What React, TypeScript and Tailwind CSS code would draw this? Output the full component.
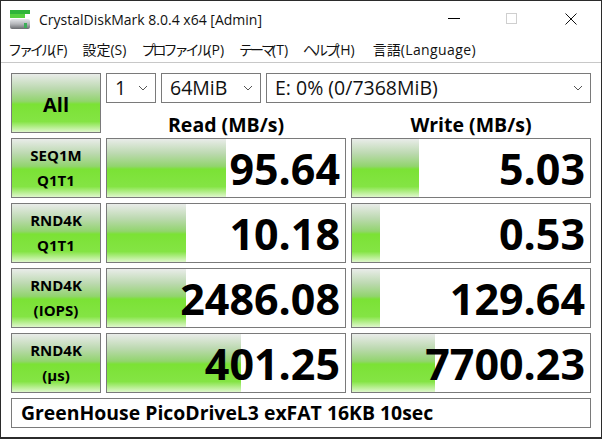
const ui = { fontFamily: '"Open Sans", "Noto Sans CJK JP", sans-serif' };

const bar = 'bg-[linear-gradient(to_bottom,#e9ece9_0%,#bcd9b0_25%,#92d46e_47%,#7be235_52%,#84e444_82%,#dff7cc_100%)]';

const rows = [
  { top: 'SEQ1M', bottom: 'Q1T1', read: '95.64', readBar: 119, write: '5.03', writeBar: 67 },
  { top: 'RND4K', bottom: 'Q1T1', read: '10.18', readBar: 79, write: '0.53', writeBar: 28 },
  { top: 'RND4K', bottom: '(IOPS)', read: '2486.08', readBar: 79, write: '129.64', writeBar: 28 },
  { top: 'RND4K', bottom: '(μs)', read: '401.25', readBar: 134, write: '7700.23', writeBar: 83 },
];

// katakana in the original menu font is a lot narrower than Noto's
const menus = [
  { jp: 'ファイル', key: '(F)', jpClass: 'tracking-[-3px]', keyClass: '' },
  { jp: '設定', key: '(S)', jpClass: '', keyClass: '' },
  { jp: 'プロファイル', key: '(P)', jpClass: 'tracking-[-3px]', keyClass: '' },
  { jp: 'テーマ', key: '(T)', jpClass: 'tracking-[-3px]', keyClass: '' },
  { jp: 'ヘルプ', key: '(H)', jpClass: 'tracking-[-3px]', keyClass: '' },
  { jp: '言語', key: '(Language)', jpClass: 'ml-[3px]', keyClass: 'tracking-[0.4px]' },
];

function Chevron() {
  return (
    <svg width="10" height="6" viewBox="0 0 10 6" className="shrink-0">
      <path d="M1 1l4 4 4-4" fill="none" stroke="#555" strokeWidth="1" />
    </svg>
  );
}

function Select({ label, className }: { label: string; className: string }) {
  return (
    <div className={`flex h-[30px] items-center justify-between border border-[#7a7a7a] pl-2 pr-[7px] text-[19.5px] ${className}`}>
      <span>{label}</span>
      <Chevron />
    </div>
  );
}

function Score({ value, width }: { value: string; width: number }) {
  return (
    <div className="relative flex h-[60px] items-center justify-end overflow-hidden border border-[#7a7a7a] pr-[5px] text-[43px] font-bold leading-none text-black">
      <div className={`absolute inset-y-0 left-0 ${bar}`} style={{ width }} />
      <span className="relative">{value}</span>
    </div>
  );
}

function DiskIcon() {
  return (
    <svg width="21" height="21" viewBox="0 0 21 21" className="mt-[3px]">
      <defs>
        <linearGradient id="disk" x1="0" y1="0" x2="0" y2="1">
          <stop offset="0" stopColor="#e4e6ea" />
          <stop offset="0.5" stopColor="#b4b6ba" />
          <stop offset="1" stopColor="#6a6c70" />
        </linearGradient>
      </defs>
      <rect x="0" y="0" width="20" height="4" fill="#2fb53a" />
      <rect x="0" y="4" width="15" height="4" fill="#55d040" />
      <rect x="0" y="9" width="20" height="10" rx="2" fill="url(#disk)" />
      <rect x="14" y="13" width="3" height="5" fill="#3fae5a" />
    </svg>
  );
}

export default function App() {
  return (
    <div className="flex h-[439px] w-[602px] flex-col overflow-hidden border border-b-2 border-[#2b2b2b] bg-white text-[#111]" style={ui}>
      <div className="flex h-[35px] shrink-0 items-center pl-[9px]">
        <DiskIcon />
        <span className="ml-[8px] pt-px text-[14px]">CrystalDiskMark 8.0.4 x64 [Admin]</span>
        <div className="ml-auto flex items-center">
          <div className="mr-[46px] h-px w-[12px] bg-black" />
          <div className="mr-[48px] h-[11px] w-[11px] border border-[#cfcfcf]" />
          <svg width="12" height="12" viewBox="0 0 12 12" className="mr-[24px]">
            <path d="M0.5 0.5l11 11M11.5 0.5l-11 11" stroke="#111" strokeWidth="1" />
          </svg>
        </div>
      </div>
      <div className="flex h-[27px] shrink-0 items-center gap-[15px] border-b border-[#c8c8c8] pl-[7px] text-[14px]">
        {menus.map((m) => (
          <span key={m.jp}>
            <span className={m.jpClass}>{m.jp}</span>
            <span className={m.keyClass}>{m.key}</span>
          </span>
        ))}
      </div>
      <div className="grid grid-cols-[90px_240px_240px] gap-[5px] pl-[10px] pt-[10px]">
        <div className={`row-span-2 flex h-[60px] items-center justify-center border border-[#7a7a7a] pt-[3px] text-[20px] font-bold text-black ${bar}`}>
          All
        </div>
        <div className="col-span-2 flex gap-[5px]">
          <Select label="1" className="w-[50px]" />
          <Select label="64MiB" className="w-[100px]" />
          <Select label="E: 0% (0/7368MiB)" className="w-[325px]" />
        </div>
        <div className="mt-[2px] h-[23px] text-center text-[19.5px] font-bold leading-[30px] text-black">Read (MB/s)</div>
        <div className="mt-[2px] h-[23px] text-center text-[19.5px] font-bold leading-[30px] text-black">Write (MB/s)</div>
        {rows.map((r, i) => (
          <div key={i} className="contents">
            <div className={`flex h-[60px] flex-col items-center justify-center gap-[4px] border border-[#7a7a7a] text-[15px] font-bold leading-[21px] text-black ${bar}`}>
              <span>{r.top}</span>
              <span>{r.bottom}</span>
            </div>
            <Score value={r.read} width={r.readBar} />
            <Score value={r.write} width={r.writeBar} />
          </div>
        ))}
        <div className="col-span-3 flex h-[30px] items-center border border-[#7a7a7a] pl-[9px] text-[19.4px] font-bold text-black">
          GreenHouse PicoDriveL3 exFAT 16KB 10sec
        </div>
      </div>
    </div>
  );
}
